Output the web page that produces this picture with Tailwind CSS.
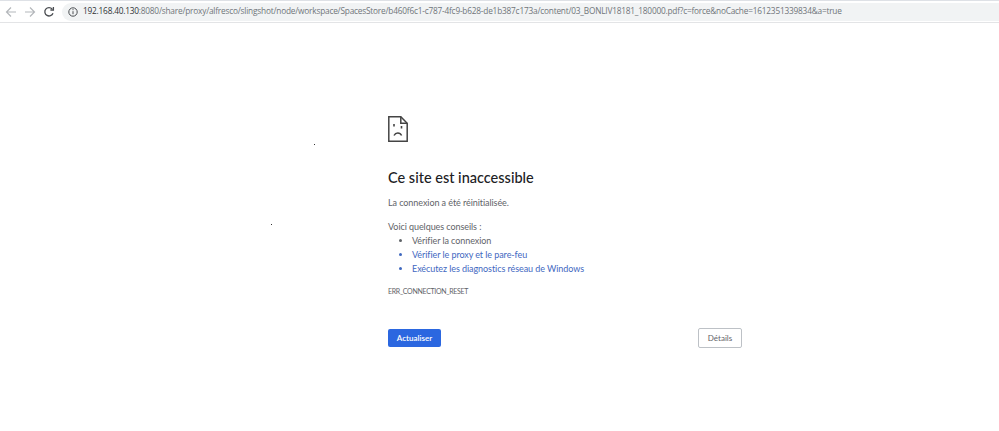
<!DOCTYPE html>
<html lang="fr">
<head>
<meta charset="UTF-8">
<title>192.168.40.130</title>
<script src="https://cdn.jsdelivr.net/npm/@tailwindcss/browser@4"></script>
</head>
<body class="relative h-[431px] w-[999px] overflow-hidden bg-white font-['Lato',sans-serif] text-[#3c4043]">
  <!-- Toolbar -->
  <div class="flex h-[23px] items-center border-t border-b border-t-[#dee1e6] border-b-[#e3e4e6] bg-white pl-[5px]">
    <svg class="h-[12px] w-[12px] text-[#b4b7bb]" viewBox="0 0 12 12" fill="none" stroke="currentColor" stroke-width="1.2"><path d="M11 6H1.5M6 1.5 1.5 6 6 10.5"/></svg>
    <svg class="ml-[7px] h-[12px] w-[12px] text-[#b4b7bb]" viewBox="0 0 12 12" fill="none" stroke="currentColor" stroke-width="1.2"><path d="M1 6h9.5M6 1.5 10.500 6 6 10.5"/></svg>
    <svg class="ml-[7px] h-[12px] w-[12px] text-[#4a4d51]" viewBox="0 0 12 12" fill="none" stroke="currentColor" stroke-width="1.3"><path d="M10 7.2A4.200 4.200 0 1 1 9.200 3"/><path d="M10.400 1v3H7.400" /></svg>
    <div class="ml-[7px] flex h-[18px] flex-1 items-center rounded-l-full bg-[#f1f3f4] pl-[6px]">
      <svg class="h-[10px] w-[10px] text-[#4a4d51]" viewBox="0 0 10 10" fill="none" stroke="currentColor"><circle cx="5" cy="5" r="4.200"/><path d="M5 4.200v3M5 2.200v1"/></svg>
      <span class="ml-[5px] whitespace-nowrap font-['Open_Sans',sans-serif] text-[8.300px] leading-none tracking-[-0.21px] text-[#70757a]"><span class="text-[#303336]">192.168.40.130</span>:8080/share/proxy/alfresco/slingshot/node/workspace/SpacesStore/b460f6c1-c787-4fc9-b628-de1b387c173a/content/03_BONLIV18181_180000.pdf?c=force&amp;noCache=1612351339834&amp;a=true</span>
    </div>
  </div>

  <!-- Specks in the page -->
  <div class="absolute left-[314px] top-[144px] h-px w-px bg-[#333]"></div>
  <div class="absolute left-[271px] top-[224px] h-px w-px bg-[#333]"></div>

  <!-- Error page -->
  <main class="ml-[388px] w-[354px] pt-[93px]">
    <svg class="h-[26px] w-[20px] text-[#444]" viewBox="0 0 20 26" fill="none" stroke="currentColor" stroke-width="1.5">
      <path d="M.8.8h12l6.400 6.400v18H.8z"/>
      <path d="M12.800.8v6.400h6.400"/>
      <path d="M6 8v2.500M13.500 10v2.500" stroke-width="1.6"/>
      <path d="M6 19.500c1-2 2.400-2.500 3.800-2.500s2.900.5 3.800 2.500"/>
    </svg>
    <h1 class="mt-[26px] text-[14.500px] leading-[20px] font-medium text-[#202124]">Ce site est inaccessible</h1>
    <p class="mt-[8px] text-[9px] leading-[14px] tracking-[-0.07px] text-[#5f6368]">La connexion a été réinitialisée.</p>
    <p class="mt-[10px] text-[9px] leading-[14px] tracking-[-0.07px] text-[#5f6368]">Voici quelques conseils :</p>
    <ul class="ml-[24px] list-disc text-[9px] leading-[14px] tracking-[-0.07px] text-[#5f6368]">
      <li>Vérifier la connexion</li>
      <li class="text-[#3f68bf]">Vérifier le proxy et le pare-feu</li>
      <li class="text-[#3f68bf]">Exécutez les diagnostics réseau de Windows</li>
    </ul>
    <p class="mt-[9px] text-[7px] leading-[12px] tracking-[-0.3px] text-[#5f6368]">ERR_CONNECTION_RESET</p>
    <div class="mt-[31px] flex items-center justify-between">
      <button class="h-[18px] w-[53px] rounded-[2px] bg-[#2b67e0] text-[8px] font-semibold text-white">Actualiser</button>
      <button class="h-[20px] w-[44px] rounded-[2px] border border-[#bdc1c6] bg-white text-[8px] text-[#5f6368]">Détails</button>
    </div>
  </main>
</body>
</html>
